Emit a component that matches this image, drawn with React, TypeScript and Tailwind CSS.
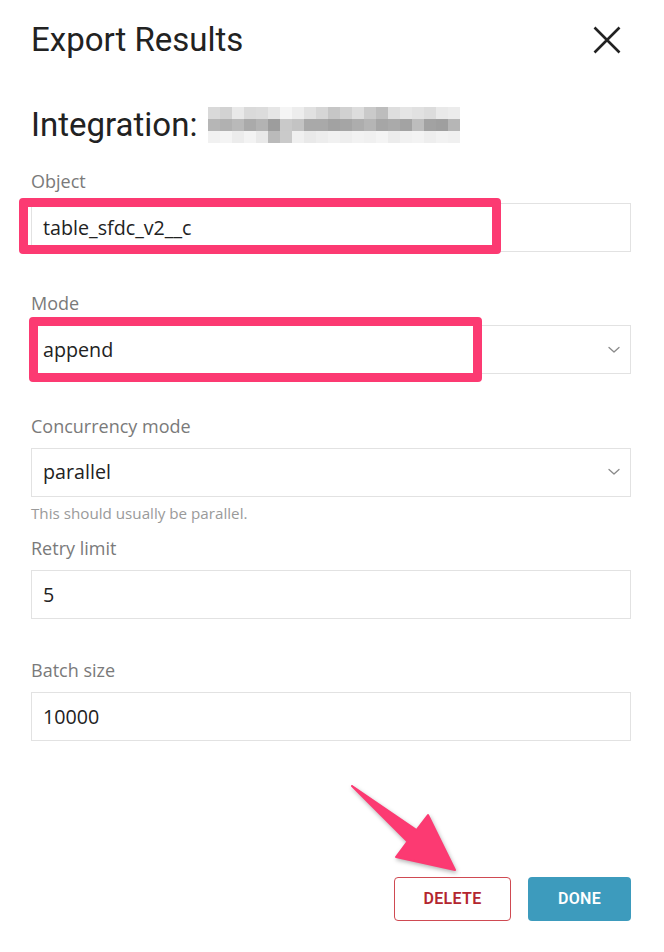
import React from 'react'

const blurRows: string[][] = [
  ['#d9d9d9', '#d2d2d2', '#e9e9e9', '#dadada', '#dcdcdc', '#e6e6e6', '#f5f5f5', '#ededed', '#e1e1e1', '#d6d6d6', '#c6c6c6', '#d1d1d1', '#dddddd', '#cacaca', '#bdbdbd', '#dedede', '#e5e5e5', '#e1e1e1', '#dcdcdc', '#e9e9e9', '#ececec'],
  ['#b6b6b6', '#b1b1b1', '#b9b9b9', '#aaaaaa', '#b3b3b3', '#9d9d9d', '#c9c9c9', '#c3c3c3', '#a9a9a9', '#a9a9a9', '#a2a2a2', '#a5a5a5', '#adadad', '#b5b5b5', '#a6a6a6', '#aaaaaa', '#a3a3a3', '#bdbdbd', '#a2a2a2', '#9f9f9f', '#b6b6b6'],
  ['#f1f1f1', '#f4f4f4', '#ececec', '#f3f3f3', '#e9e9e9', '#bababa', '#cacaca', '#f0f0f0', '#e9e9e9', '#ededed', '#f1f1f1', '#eeeeee', '#f2f2f2', '#f0f0f0', '#f4f4f4', '#ececec', '#f1f1f1', '#f3f3f3', '#eeeeee', '#f2f2f2', '#f0f0f0'],
]

function Chevron() {
  return (
    <svg width="12" height="8" viewBox="0 0 12 8" className="text-[#8a8a8a]">
      <path d="M1 1.5 L6 6 L11 1.5" fill="none" stroke="currentColor" strokeWidth="1.3" strokeLinecap="round" strokeLinejoin="round" />
    </svg>
  )
}

function Field({
  label,
  value,
  select,
  helper,
  mark,
}: {
  label: string
  value: string
  select?: boolean
  helper?: string
  mark?: 'object' | 'mode'
}) {
  return (
    <div className="h-[122.3px]">
      <div className="font-['Open_Sans',sans-serif] text-[18px] leading-[24px] text-[#7a7a7a] mb-[10px]">{label}</div>
      <div className="relative">
        <div className="h-[49px] border border-[#e2e2e2] bg-white flex items-center justify-between pl-[11px] pr-[10px] font-['Open_Sans',sans-serif] text-[19.7px] text-[#222]">
          <span>{value}</span>
          {select && <Chevron />}
        </div>
        {mark === 'object' && (
          <div className="absolute left-[-12px] top-[-5px] w-[482px] h-[56px] border-[9px] border-[#fc3a72] rounded-[4px]" />
        )}
        {mark === 'mode' && (
          <div className="absolute left-[-2px] top-[-8px] w-[453px] h-[65px] border-[9px] border-[#fc3a72] rounded-[4px]" />
        )}
      </div>
      {helper && (
        <div className="mt-[6px] font-['Open_Sans',sans-serif] text-[15.2px] leading-[20px] text-[#9a9a9a]">{helper}</div>
      )}
    </div>
  )
}

export default function App() {
  return (
    <div className="relative w-[664px] min-h-[952px] bg-white pl-[31px] pr-[33px] pt-[20px] font-['Roboto',sans-serif]">
      {/* Header */}
      <div className="flex items-center justify-between h-[40px]">
        <h1 className="text-[33px] leading-[40px] text-[#222] font-normal">Export Results</h1>
        <button className="mr-[10px] text-[#222]">
          <svg width="28" height="28" viewBox="0 0 28 28">
            <path d="M1.5 1.5 L26.5 26.5 M26.5 1.5 L1.5 26.5" stroke="currentColor" strokeWidth="2.6" strokeLinecap="butt" />
          </svg>
        </button>
      </div>

      {/* Integration */}
      <div className="mt-[45px] flex items-center h-[40px]">
        <span className="text-[33px] leading-[40px] text-[#222]">Integration:</span>
        <div className="ml-[11px] flex flex-col">
          {blurRows.map((row, r) => (
            <div key={r} className="flex">
              {row.map((c, i) => (
                <div key={i} className="w-[12px] h-[11.7px]" style={{ backgroundColor: c }} />
              ))}
            </div>
          ))}
        </div>
      </div>

      {/* Form */}
      <div className="mt-[24px]">
        <Field label="Object" value="table_sfdc_v2__c" mark="object" />
        <Field label="Mode" value="append" select mark="mode" />
        <Field label="Concurrency mode" value="parallel" select helper="This should usually be parallel." />
        <Field label="Retry limit" value="5" />
        <Field label="Batch size" value="10000" />
      </div>

      {/* Actions */}
      <div className="mt-[97px] flex justify-end gap-[17px]">
        <button className="w-[117px] h-[44px] rounded-[4px] border border-[#cf4a52] bg-white text-[#b3262f] text-[16px] font-semibold tracking-[0.3px]">
          DELETE
        </button>
        <button className="w-[103px] h-[44px] rounded-[4px] bg-[#3d9bbd] text-white text-[16px] font-semibold tracking-[0.3px]">
          DONE
        </button>
      </div>

      {/* Annotation arrow */}
      <svg
        className="absolute left-0 top-0 pointer-events-none drop-shadow-[1px_2px_2px_rgba(0,0,0,0.3)]"
        width="664"
        height="952"
        viewBox="0 0 664 952"
      >
        <polygon
          points="352,786 416.5,830 428,815 455,870 396,857 407.5,841.5"
          fill="#fc3a72"
          stroke="#fc3a72"
          strokeWidth="2"
          strokeLinejoin="round"
        />
      </svg>
    </div>
  )
}
